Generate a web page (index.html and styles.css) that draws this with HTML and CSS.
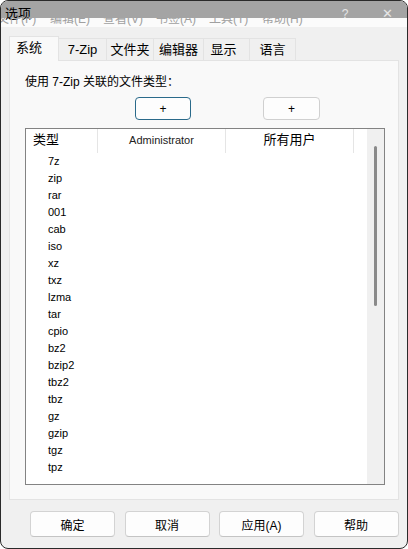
FILE: index.html
```html
<!DOCTYPE html>
<html lang="zh-CN">
<head>
  <meta charset="UTF-8" />
  <title>选项</title>
  <link rel="stylesheet" href="styles.css">
</head>
<body>
  <div class="window">
    <div class="titlebar">
      <span class="title">选项</span>
      <span class="tb-btn">?</span>
      <span class="tb-btn close">✕</span>
    </div>
    <!-- menu of the main window shows through under the title bar -->
    <div class="ghost-menu">
      <div class="ghost-line">
        <span>文件(F)</span><span>编辑(E)</span><span>查看(V)</span><span>书签(A)</span><span>工具(T)</span><span>帮助(H)</span>
      </div>
    </div>
    <div class="dialog">
      <div class="tabs">
        <div class="tab active">系统</div>
        <div class="tab">7-Zip</div>
        <div class="tab">文件夹</div>
        <div class="tab">编辑器</div>
        <div class="tab">显示</div>
        <div class="tab">语言</div>
      </div>
      <div class="page">
        <div class="label">使用 7-Zip 关联的文件类型：</div>
        <div class="plus-row">
          <button class="plus focus">+</button>
          <button class="plus">+</button>
        </div>
        <div class="list">
          <div class="list-main">
            <div class="list-head">
              <div class="col c-type">类型</div>
              <div class="col c-user">Administrator</div>
              <div class="col c-all">所有用户</div>
            </div>
            <div class="rows">
              <div class="row">7z</div>
              <div class="row">zip</div>
              <div class="row">rar</div>
              <div class="row">001</div>
              <div class="row">cab</div>
              <div class="row">iso</div>
              <div class="row">xz</div>
              <div class="row">txz</div>
              <div class="row">lzma</div>
              <div class="row">tar</div>
              <div class="row">cpio</div>
              <div class="row">bz2</div>
              <div class="row">bzip2</div>
              <div class="row">tbz2</div>
              <div class="row">tbz</div>
              <div class="row">gz</div>
              <div class="row">gzip</div>
              <div class="row">tgz</div>
              <div class="row">tpz</div>
            </div>
          </div>
          <div class="scrollbar"><div class="thumb"></div></div>
        </div>
      </div>
      <div class="buttons">
        <button class="btn">确定</button>
        <button class="btn">取消</button>
        <button class="btn">应用(A)</button>
        <button class="btn">帮助</button>
      </div>
    </div>
  </div>
</body>
</html>
```

FILE: styles.css
```css
body {
  margin: 0;
  font-family: "Liberation Sans", "Noto Sans CJK SC", sans-serif;
  font-size: 12px;
  color: #000;
  background: #fff;
}
.window {
  width: 408px;
  height: 549px;
  box-sizing: border-box;
  border: 1px solid #2a2a2a;
  border-radius: 8px;
  background: #f0f0f0;
  overflow: hidden;
}
.titlebar {
  height: 17px;
  background: #a4a4a4;
  display: flex;
  align-items: flex-start;
}
.title {
  font-size: 13px;
  line-height: 16px;
  padding: 5px 0 0 4px;
  height: 12px;
  flex: 1;
}
.tb-btn {
  color: #e6e6e6;
  font-size: 12px;
  line-height: 14px;
  padding-top: 6px;
  width: 44px;
  text-align: center;
}
.tb-btn.close {
  font-size: 13px;
  width: 40px;
}
.ghost-menu {
  height: 9px;
  background: #fbfbfb;
  overflow: hidden;
}
.ghost-line {
  margin-top: -7px;
  margin-left: -4px;
  color: #a0a0a0;
  font-size: 12px;
  line-height: 16px;
  white-space: nowrap;
}
.ghost-line span {
  display: inline-block;
  width: 53px;
}
.dialog {
  padding: 9px 0 0 8px;
}
.tabs {
  display: flex;
  align-items: flex-end;
  height: 24px;
  font-size: 13px;
}
.tab {
  height: 22px;
  line-height: 21px;
  box-sizing: border-box;
  padding: 0;
  text-align: center;
  white-space: nowrap;
  border: 1px solid #e3e3e3;
  border-bottom: none;
  border-left: none;
  background: #f0f0f0;
}
.tab:nth-child(2) { width: 48px; }
.tab:nth-child(3) { width: 47px; }
.tab:nth-child(4) { width: 50px; }
.tab:nth-child(5) { width: 46px; padding-right: 6px; }
.tab:nth-child(6) { width: 46px; }
.tab.active {
  width: 50px;
  height: 25px;
  line-height: 22px;
  padding-right: 10px;
  border-left: 1px solid #e3e3e3;
  background: #f9f9f9;
  margin-bottom: -1px;
  position: relative;
}
.page {
  width: 390px;
  height: 440px;
  box-sizing: border-box;
  border: 1px solid #e3e3e3;
  background: #f9f9f9;
  padding: 13px 0 0 15px;
}
.label {
  line-height: 16px;
}
.plus-row {
  display: flex;
  gap: 72px;
  margin: 7px 0 0 110px;
}
.plus {
  width: 57px;
  height: 23px;
  font-family: inherit;
  font-size: 12px;
  background: #fdfdfd;
  border: 1px solid #d0d0d0;
  border-radius: 4px;
  padding: 0;
}
.plus.focus {
  width: 56px;
  border-color: #2a6a8a;
}
.list {
  margin-top: 8px;
  width: 360px;
  height: 357px;
  box-sizing: border-box;
  border: 1px solid #838383;
  background: #fff;
  display: flex;
}
.list-main {
  flex: 1;
}
.list-head {
  display: flex;
  height: 24px;
  line-height: 22px;
}
.col {
  box-sizing: border-box;
  border-right: 1px solid #e5e5e5;
}
.c-type {
  width: 72px;
  padding-left: 7px;
  font-size: 13px;
}
.c-user {
  width: 128px;
  text-align: center;
  font-size: 11px;
  color: #222;
}
.c-all {
  width: 128px;
  text-align: center;
  font-size: 13px;
}
.row {
  height: 17px;
  line-height: 17px;
  padding-left: 22px;
  font-size: 11px;
}
.scrollbar {
  width: 17px;
  background: #f0f0f0;
  display: flex;
  justify-content: center;
  padding-top: 17px;
}
.thumb {
  width: 3px;
  height: 160px;
  background: #8a8a8a;
  border-radius: 2px;
}
.buttons {
  display: flex;
  gap: 9.5px;
  margin: 11px 0 0 21px;
}
.btn {
  width: 85px;
  height: 26px;
  font-family: inherit;
  font-size: 12px;
  background: #fdfdfd;
  border: 1px solid #d3d3d3;
  border-bottom-color: #c4c4c4;
  border-radius: 4px;
  padding: 0;
  color: #000;
}
```
